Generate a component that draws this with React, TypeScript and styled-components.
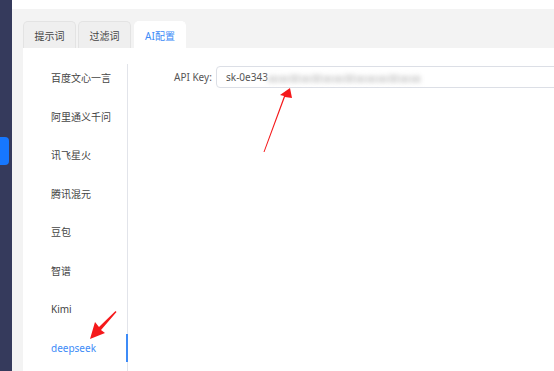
import React from "react";
import styled, { createGlobalStyle } from "styled-components";

const GlobalStyle = createGlobalStyle`
  html, body { margin: 0; padding: 0; }
  body {
    font-family: "Noto Sans", "Noto Sans CJK SC", sans-serif;
    font-size: 10px;
    color: #333;
  }
`;

const Page = styled.div`
  position: relative;
  display: flex;
  width: 554px;
  height: 371px;
  overflow: hidden;
`;

const SideBar = styled.div`
  width: 12px;
  flex: none;
  background: #353a5c;
  padding-top: 137px;
  box-sizing: border-box;
`;

const NavMarker = styled.div`
  width: 9px;
  height: 28px;
  background: #1677ff;
  border-radius: 0 4px 4px 0;
`;

const Main = styled.div`
  flex: 1;
  display: flex;
  flex-direction: column;
  background: #f3f3f3;
  min-width: 0;
`;

const TopStrip = styled.div`
  height: 9px;
  background: #fff;
  flex: none;
`;

const TabBar = styled.div`
  display: flex;
  gap: 2px;
  padding: 12px 0 0 11px;
  flex: none;
`;

const Tab = styled.div<{ $active?: boolean; $w: number }>`
  width: ${(p) => p.$w}px;
  height: 27px;
  box-sizing: border-box;
  display: flex;
  align-items: center;
  justify-content: center;
  border-radius: 5px 5px 0 0;
  background: ${(p) => (p.$active ? "#fff" : "#efefef")};
  border: 1px solid ${(p) => (p.$active ? "#fff" : "#e3e3e3")};
  border-bottom: none;
  color: ${(p) => (p.$active ? "#3d8bf7" : "#444")};
  margin-left: ${(p) => (p.$active ? "1px" : "0")};
`;

const Panel = styled.div`
  flex: 1;
  margin-left: 11px;
  background: #fff;
  display: flex;
  padding-top: 16px;
`;

const Menu = styled.div`
  width: 105px;
  flex: none;
  box-sizing: border-box;
  border-right: 1px solid #e2e4ea;
  display: flex;
  flex-direction: column;
  gap: 10.57px;
`;

const MenuItem = styled.div<{ $active?: boolean }>`
  position: relative;
  height: 28px;
  line-height: 28px;
  padding-left: 28px;
  color: ${(p) => (p.$active ? "#3d8bf7" : "#444")};
  &::after {
    content: "";
    display: ${(p) => (p.$active ? "block" : "none")};
    position: absolute;
    right: -1px;
    top: 0;
    width: 2px;
    height: 28px;
    background: #3d8bf7;
  }
`;

const Content = styled.div`
  flex: 1;
  padding: 2px 0 0 46px;
`;

const FormRow = styled.div`
  display: flex;
  align-items: center;
`;

const Label = styled.label`
  width: 42px;
  padding-right: 6px;
  box-sizing: border-box;
  white-space: nowrap;
  color: #555;
`;

const Field = styled.div`
  width: 420px;
  flex: none;
  height: 22px;
  box-sizing: border-box;
  border: 1px solid #dcdfe6;
  border-radius: 4px;
  display: flex;
  align-items: center;
  padding-left: 9px;
  color: #555;
  white-space: nowrap;
`;

const Masked = styled.span`
  color: #e2e2e2;
  filter: blur(2px);
  letter-spacing: 1px;
`;

const Overlay = styled.svg`
  position: absolute;
  left: 0;
  top: 0;
  pointer-events: none;
`;

const models = [
  "百度文心一言",
  "阿里通义千问",
  "讯飞星火",
  "腾讯混元",
  "豆包",
  "智谱",
  "Kimi",
  "deepseek",
];

export default function App() {
  return (
    <>
      <GlobalStyle />
      <Page>
        <SideBar>
          <NavMarker />
        </SideBar>
        <Main>
          <TopStrip />
          <TabBar>
            <Tab $w={53}>提示词</Tab>
            <Tab $w={53}>过滤词</Tab>
            <Tab $w={52} $active>
              AI配置
            </Tab>
          </TabBar>
          <Panel>
            <Menu>
              {models.map((m) => (
                <MenuItem key={m} $active={m === "deepseek"}>
                  {m}
                </MenuItem>
              ))}
            </Menu>
            <Content>
              <FormRow>
                <Label>API Key:</Label>
                <Field>
                  sk-0e343
                  <Masked>▆▆▇▆▇▆▆▇▆▆▆▇▆▆</Masked>
                </Field>
              </FormRow>
            </Content>
          </Panel>
        </Main>
        <Overlay width="554" height="371" viewBox="0 0 554 371">
          <polygon
            points="263.5,152 264.5,152 285,97 292,98 290,88 280,95 284,96"
            fill="#f5191b"
          />
          <polygon
            points="116.5,312 115.5,311 99,327 95,322 90,339 105,333 101,330"
            fill="#f5191b"
          />
        </Overlay>
      </Page>
    </>
  );
}
